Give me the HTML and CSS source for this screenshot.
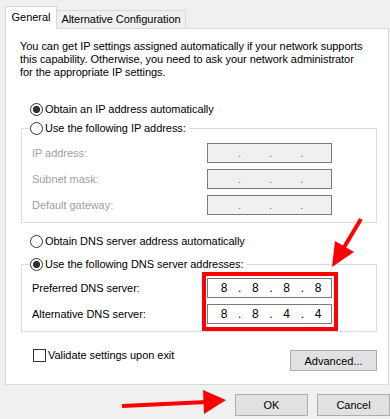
FILE: index.html
```html
<!DOCTYPE html>
<html>
<head>
<meta charset="utf-8">
<link rel="stylesheet" href="styles.css">
</head>
<body>
<div class="tabs">
  <div class="tab active">General</div>
  <div class="tab">Alternative Configuration</div>
</div>
<div class="panel">
  <p class="intro">You can get IP settings assigned automatically if your network supports<br>this capability. Otherwise, you need to ask your network administrator<br>for the appropriate IP settings.</p>
  <div class="radio-row r1"><span class="radio checked"></span>Obtain an IP address automatically</div>
  <fieldset class="group g1">
    <legend><span class="radio"></span>Use the following IP address:</legend>
    <div class="field disabled"><span class="label">IP address:</span><span class="ipbox off"><span class="oct"></span><span class="dot">.</span><span class="oct"></span><span class="dot">.</span><span class="oct"></span><span class="dot">.</span><span class="oct"></span></span></div>
    <div class="field disabled"><span class="label">Subnet mask:</span><span class="ipbox off"><span class="oct"></span><span class="dot">.</span><span class="oct"></span><span class="dot">.</span><span class="oct"></span><span class="dot">.</span><span class="oct"></span></span></div>
    <div class="field disabled"><span class="label">Default gateway:</span><span class="ipbox off"><span class="oct"></span><span class="dot">.</span><span class="oct"></span><span class="dot">.</span><span class="oct"></span><span class="dot">.</span><span class="oct"></span></span></div>
  </fieldset>
  <div class="radio-row r3"><span class="radio"></span>Obtain DNS server address automatically</div>
  <fieldset class="group g2">
    <legend><span class="radio checked"></span>Use the following DNS server addresses:</legend>
    <div class="field"><span class="label">Preferred DNS server:</span><span class="ipbox"><span class="oct">8</span><span class="dot">.</span><span class="oct">8</span><span class="dot">.</span><span class="oct">8</span><span class="dot">.</span><span class="oct">8</span></span></div>
    <div class="field"><span class="label">Alternative DNS server:</span><span class="ipbox"><span class="oct">8</span><span class="dot">.</span><span class="oct">8</span><span class="dot">.</span><span class="oct">4</span><span class="dot">.</span><span class="oct">4</span></span></div>
  </fieldset>
  <div class="bottom-row">
    <div class="check"><span class="box"></span>Validate settings upon exit</div>
    <button class="btn adv">Advanced...</button>
  </div>
</div>
<div class="footer">
  <button class="btn foot">OK</button>
  <button class="btn foot">Cancel</button>
</div>
<svg class="annot" width="390" height="419" viewBox="0 0 390 419">
  <rect x="204" y="274" width="132" height="55" fill="none" stroke="#ff0000" stroke-width="4"/>
  <line x1="361" y1="219" x2="343" y2="249" stroke="#ff0000" stroke-width="4"/>
  <polygon points="332,267 335,241 354,252" fill="#ff0000"/>
  <line x1="122" y1="406" x2="207" y2="402" stroke="#ff0000" stroke-width="4"/>
  <polygon points="226,400 203,390 204,414" fill="#ff0000"/>
</svg>
</body>
</html>
```
FILE: styles.css
```css
* { box-sizing: border-box; }
html, body { margin: 0; padding: 0; }
body {
  width: 390px;
  height: 419px;
  overflow: hidden;
  background: #f0f0f0;
  font-family: "Liberation Sans", Arial, sans-serif;
  font-size: 11px;
  letter-spacing: -0.05px;
  color: #000;
}
.tabs {
  display: flex;
  align-items: flex-end;
  margin: 6px 0 0 5px;
  height: 22px;
}
.tab {
  height: 18px;
  width: 129px;
  padding-top: 1px;
  line-height: 14px;
  text-align: center;
  background: #f0f0f0;
  border: 1px solid #d9d9d9;
  border-left: none;
  border-bottom: none;
}
.tab.active {
  position: relative;
  z-index: 2;
  width: 52px;
  height: 23px;
  margin-bottom: -1px;
  padding-top: 3px;
  background: #fff;
  border-left: 1px solid #d9d9d9;
}
.panel {
  position: relative;
  z-index: 1;
  height: 357px;
  margin: 0 1px 0 5px;
  padding: 11px 11px 0 14px;
  background: #fff;
  border: 1px solid #d9d9d9;
}
.intro {
  margin: 0;
  line-height: 13px;
}
.radio-row {
  display: flex;
  align-items: center;
  height: 16px;
  padding-left: 10px;
}
.r1 { margin-top: 22px; }
.r3 { margin-top: 10px; }
.radio {
  flex: 0 0 13px;
  width: 13px;
  height: 13px;
  margin-right: 2px;
  border: 1px solid #333;
  border-radius: 50%;
  background: #fff;
}
.radio.checked {
  background: radial-gradient(circle, #333 0, #333 3.3px, #fff 3.9px);
}
.group {
  margin: 3px 0 0 1px;
  padding: 7px 0 7px 8px;
  border: 1px solid #dcdcdc;
  min-width: 0;
}
.g2 { margin-top: 7px; padding-top: 6px; }
.group legend {
  display: flex;
  align-items: center;
  height: 16px;
  padding: 0 3px 0 0;
}
.field {
  display: flex;
  align-items: center;
  height: 20px;
  padding-left: 2px;
}
.field + .field { margin-top: 6px; }
.label {
  flex: 0 0 175px;
}
.disabled .label { color: #a0a0a0; }
.ipbox {
  display: flex;
  width: 125px;
  height: 20px;
  padding-left: 2px;
  border: 1px solid #7a7a7a;
  background: #fff;
  font-size: 12px;
  line-height: 18px;
  letter-spacing: 0;
}
.ipbox.off {
  background: #f0f0f0;
  color: #6d6d6d;
  font-size: 11px;
}
.oct {
  flex: 0 0 28px;
  text-align: center;
}
.dot {
  flex: 0 0 2px;
  display: flex;
  justify-content: center;
  overflow: visible;
}
.bottom-row {
  display: flex;
  justify-content: space-between;
  align-items: flex-start;
  margin-top: 15px;
}
.check {
  display: flex;
  align-items: center;
  height: 16px;
  padding-left: 13px;
}
.box {
  width: 13px;
  height: 13px;
  margin-right: 2px;
  border: 1px solid #333;
  background: #fff;
}
.btn {
  font-family: "Liberation Sans", Arial, sans-serif;
  font-size: 11px;
  color: #000;
  background: #e1e1e1;
  border: 1px solid #adadad;
  padding: 0;
  margin: 0;
  text-align: center;
}
.adv {
  width: 87px;
  height: 21px;
  margin-top: 3px;
}
.footer {
  display: flex;
  justify-content: flex-end;
  gap: 9px;
  margin-top: 9px;
}
.foot {
  width: 73px;
  height: 22px;
}
.annot {
  position: absolute;
  left: 0;
  top: 0;
  z-index: 5;
  pointer-events: none;
}
```
